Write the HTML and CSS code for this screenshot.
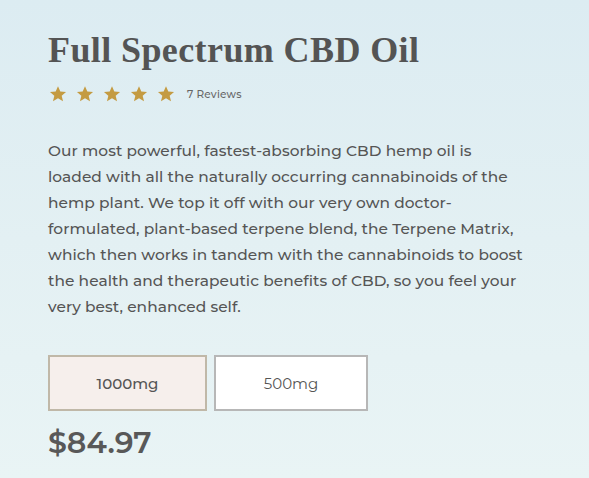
FILE: index.html
```html
<!DOCTYPE html>
<html>
<head>
<meta charset="utf-8">
<link rel="stylesheet" href="styles.css">
</head>
<body>
<div class="product">
  <h1 class="title">Full Spectrum CBD Oil</h1>
  <div class="rating">
    <div class="stars">
      <svg class="star" viewBox="0 0 24 24"><path d="M12 1.5l3.1 7.1 7.6.6-5.8 5 1.8 7.5L12 17.7l-6.7 4 1.8-7.5-5.8-5 7.6-.6z"/></svg>
      <svg class="star" viewBox="0 0 24 24"><path d="M12 1.5l3.1 7.1 7.6.6-5.8 5 1.8 7.5L12 17.7l-6.7 4 1.8-7.5-5.8-5 7.6-.6z"/></svg>
      <svg class="star" viewBox="0 0 24 24"><path d="M12 1.5l3.1 7.1 7.6.6-5.8 5 1.8 7.5L12 17.7l-6.7 4 1.8-7.5-5.8-5 7.6-.6z"/></svg>
      <svg class="star" viewBox="0 0 24 24"><path d="M12 1.5l3.1 7.1 7.6.6-5.8 5 1.8 7.5L12 17.7l-6.7 4 1.8-7.5-5.8-5 7.6-.6z"/></svg>
      <svg class="star" viewBox="0 0 24 24"><path d="M12 1.5l3.1 7.1 7.6.6-5.8 5 1.8 7.5L12 17.7l-6.7 4 1.8-7.5-5.8-5 7.6-.6z"/></svg>
    </div>
    <span class="reviews">7 Reviews</span>
  </div>
  <p class="desc">Our most powerful, fastest-absorbing CBD hemp oil is loaded with all the naturally occurring cannabinoids of the hemp plant. We top it off with our very own doctor-formulated, plant-based terpene blend, the Terpene Matrix, which then works in tandem with the cannabinoids to boost the health and therapeutic benefits of CBD, so you feel your very best, enhanced self.</p>
  <div class="options">
    <button class="opt selected">1000mg</button>
    <button class="opt">500mg</button>
  </div>
  <div class="price">$84.97</div>
</div>
</body>
</html>
```
FILE: styles.css
```css
html, body { margin: 0; padding: 0; }
body {
  width: 589px;
  height: 478px;
  overflow: hidden;
  background: linear-gradient(180deg, #dcecf2 0%, #e3f0f3 50%, #e9f4f5 100%);
  font-family: "Montserrat", "DejaVu Sans", "Noto Sans", sans-serif;
  color: #555;
}
.product {
  padding: 30px 0 0 48px;
}
.title {
  margin: 0;
  font-family: "Liberation Serif", "DejaVu Serif", serif;
  font-weight: bold;
  font-size: 36px;
  line-height: 40px;
  color: #545454;
  letter-spacing: 0.4px;
}
.rating {
  display: flex;
  align-items: center;
  margin-top: 14px;
  height: 20px;
}
.stars { display: flex; gap: 9px; margin-left: 1px; }
.star { width: 18px; height: 18px; fill: #c49b42; display: block; }
.reviews {
  margin-left: 12px;
  font-size: 10.5px;
  font-weight: 500;
  color: #666;
  letter-spacing: 0.2px;
}
.desc {
  margin: 34px 0 0 0;
  width: 476px;
  font-size: 15.4px;
  font-weight: 500;
  line-height: 26px;
  color: #555;
  letter-spacing: 0.05px;
}
.options {
  display: flex;
  gap: 7px;
  margin-top: 35px;
}
.opt {
  height: 56px;
  border: 2px solid #b7b7b7;
  background: #fff;
  font-family: inherit;
  font-size: 15px;
  font-weight: 400;
  color: #555;
  padding: 0;
  width: 154px;
}
.opt.selected {
  width: 159px;
  background: #f6efec;
  border-color: #c0b8a8;
  font-weight: 500;
}
.price {
  margin-top: 13px;
  font-size: 30px;
  font-weight: 600;
  color: #585858;
}
```
